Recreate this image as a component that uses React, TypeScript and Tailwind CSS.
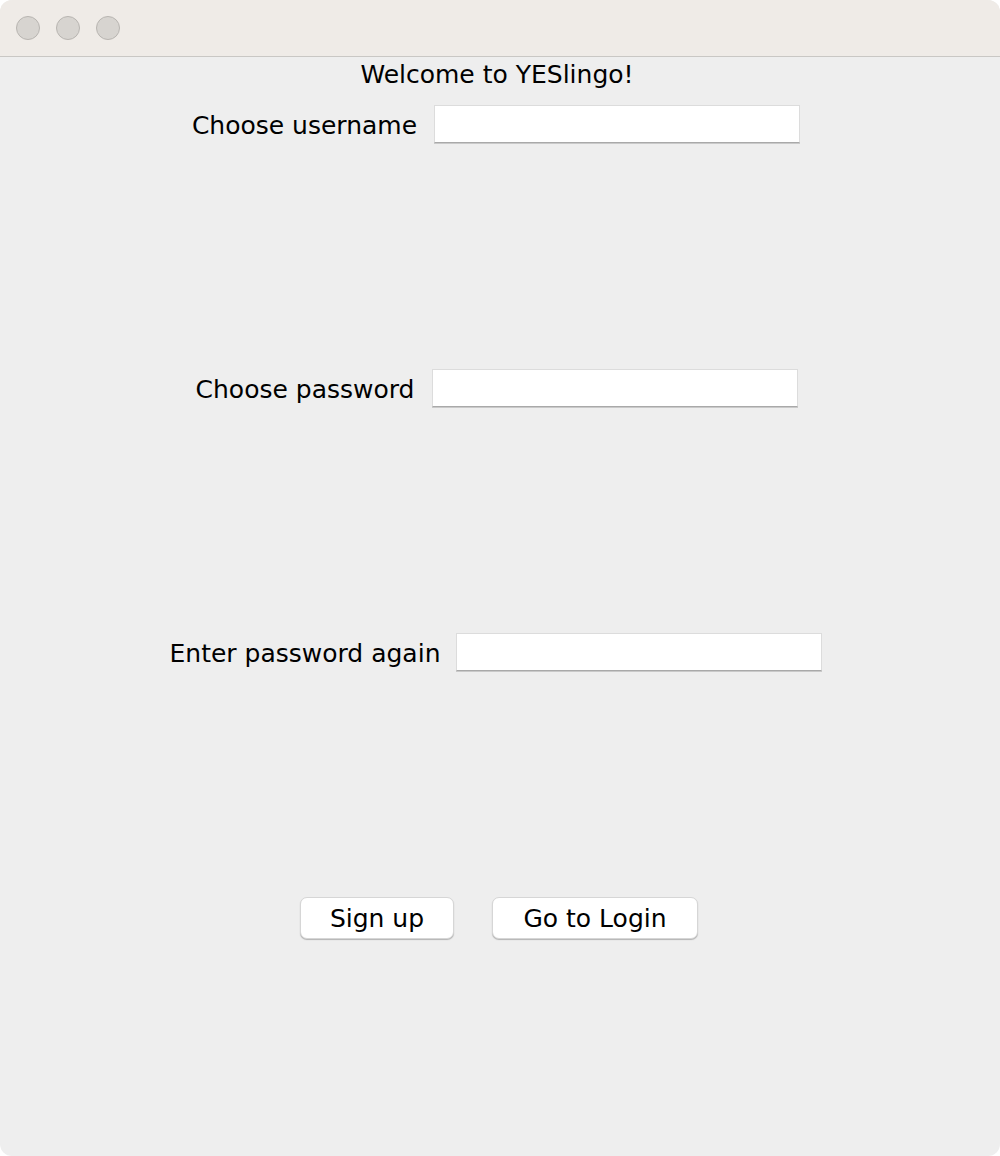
import React from "react";

function Field({ label, gap }: { label: string; gap: string }) {
  return (
    <div className={`flex items-center justify-center ${gap} h-[38px]`}>
      <span className="text-[25px] leading-none text-black pt-[2px]">{label}</span>
      <div className="w-[366px] h-[38px] bg-white border border-[#dcdcdc] border-b-[#a9a9a9] shadow-[0_1px_0_#c9c9c9]" />
    </div>
  );
}

export default function App() {
  return (
    <div className="w-[1000px] h-[1156px] bg-white">
      <div
        className="w-[1000px] h-[1156px] rounded-[12px] overflow-hidden bg-[#eeeeee] flex flex-col"
        style={{ fontFamily: '"DejaVu Sans", "Noto Sans", sans-serif' }}
      >
        <div className="h-[57px] shrink-0 bg-[#efebe7] border-b border-[#c9c7c4] flex items-center gap-4 pl-4">
          <div className="w-[24px] h-[24px] rounded-full bg-[#d7d4d0] border border-[#b8b5b1]" />
          <div className="w-[24px] h-[24px] rounded-full bg-[#d7d4d0] border border-[#b8b5b1]" />
          <div className="w-[24px] h-[24px] rounded-full bg-[#d7d4d0] border border-[#b8b5b1]" />
        </div>
        <div className="flex flex-col">
          <div className="h-[32px] flex items-center justify-center">
            <span className="text-[25px] leading-none text-black mr-[6px] pt-[2px]">Welcome to YESlingo!</span>
          </div>
          <div className="mt-[16px] mr-[8px]">
            <Field label="Choose username" gap="gap-[17px]" />
          </div>
          <div className="mt-[226px] mr-[6px]">
            <Field label="Choose password" gap="gap-[18px]" />
          </div>
          <div className="mt-[226px] mr-[8px]">
            <Field label="Enter password again" gap="gap-[16px]" />
          </div>
          <div className="mt-[226px] flex justify-center gap-[38px] ml-[-2px]">
            <button className="w-[154px] h-[42px] bg-white rounded-[7px] border border-[#d6d6d6] shadow-[0_1px_1px_rgba(0,0,0,0.25)] text-[25px] leading-none text-black">
              Sign up
            </button>
            <button className="w-[206px] h-[42px] bg-white rounded-[7px] border border-[#d6d6d6] shadow-[0_1px_1px_rgba(0,0,0,0.25)] text-[25px] leading-none text-black">
              Go to Login
            </button>
          </div>
        </div>
      </div>
    </div>
  );
}
